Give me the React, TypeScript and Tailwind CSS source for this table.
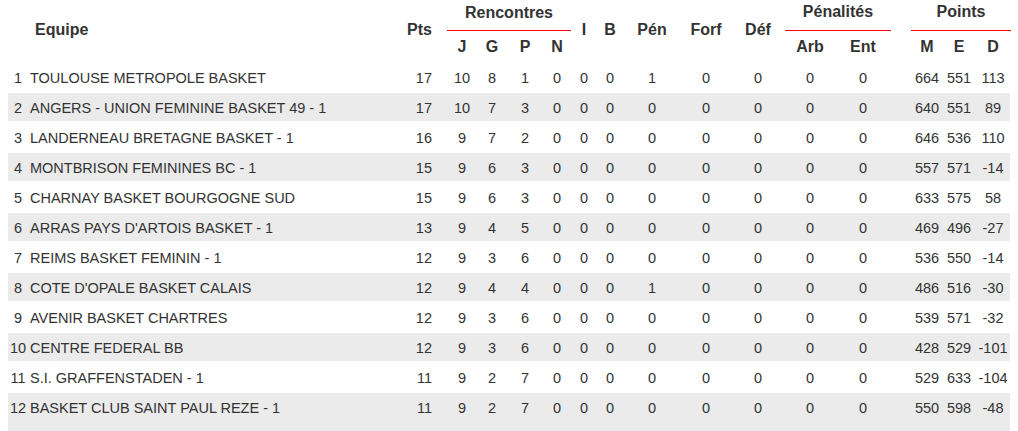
const rows: [number, string, number[]][] = [
  [1, 'TOULOUSE METROPOLE BASKET', [17, 10, 8, 1, 0, 0, 0, 1, 0, 0, 0, 0, 664, 551, 113]],
  [2, 'ANGERS - UNION FEMININE BASKET 49 - 1', [17, 10, 7, 3, 0, 0, 0, 0, 0, 0, 0, 0, 640, 551, 89]],
  [3, 'LANDERNEAU BRETAGNE BASKET - 1', [16, 9, 7, 2, 0, 0, 0, 0, 0, 0, 0, 0, 646, 536, 110]],
  [4, 'MONTBRISON FEMININES BC - 1', [15, 9, 6, 3, 0, 0, 0, 0, 0, 0, 0, 0, 557, 571, -14]],
  [5, 'CHARNAY BASKET BOURGOGNE SUD', [15, 9, 6, 3, 0, 0, 0, 0, 0, 0, 0, 0, 633, 575, 58]],
  [6, "ARRAS PAYS D'ARTOIS BASKET - 1", [13, 9, 4, 5, 0, 0, 0, 0, 0, 0, 0, 0, 469, 496, -27]],
  [7, 'REIMS BASKET FEMININ - 1', [12, 9, 3, 6, 0, 0, 0, 0, 0, 0, 0, 0, 536, 550, -14]],
  [8, "COTE D'OPALE BASKET CALAIS", [12, 9, 4, 4, 0, 0, 0, 1, 0, 0, 0, 0, 486, 516, -30]],
  [9, 'AVENIR BASKET CHARTRES', [12, 9, 3, 6, 0, 0, 0, 0, 0, 0, 0, 0, 539, 571, -32]],
  [10, 'CENTRE FEDERAL BB', [12, 9, 3, 6, 0, 0, 0, 0, 0, 0, 0, 0, 428, 529, -101]],
  [11, 'S.I. GRAFFENSTADEN - 1', [11, 9, 2, 7, 0, 0, 0, 0, 0, 0, 0, 0, 529, 633, -104]],
  [12, 'BASKET CLUB SAINT PAUL REZE - 1', [11, 9, 2, 7, 0, 0, 0, 0, 0, 0, 0, 0, 550, 598, -48]],
];

// rank | team | pts | J G P N | I B | Pén Forf Déf | Arb Ent | gap | M E D
const cols =
  'grid grid-cols-[20px_364px_55px_30px_30px_36px_28px_26px_26px_58px_50px_54px_50px_56px_20px_32px_32px_36px]';

function Row({ rank, team, values, striped, last }: { rank: number; team: string; values: number[]; striped: boolean; last: boolean }) {
  const [pts, ...rest] = values;
  const before = rest.slice(0, 11);
  const points = rest.slice(11);
  return (
    <div className={`${cols} ${last ? 'h-[38px]' : 'h-[28px]'} items-start ${striped ? 'bg-[#ebebeb]' : ''} leading-[30px]`}>
      <span className="text-center">{rank}</span>
      <span className="pl-[2px] whitespace-nowrap">{team}</span>
      <span className="pr-[15px] text-right">{pts}</span>
      {before.map((v, i) => (
        <span key={`b-${i}`} className="text-center">
          {v}
        </span>
      ))}
      <span />
      {points.map((v, i) => (
        <span key={`p-${i}`} className="text-center whitespace-nowrap">
          {v}
        </span>
      ))}
    </div>
  );
}

export default function App() {
  return (
    <div className="h-[431px] w-[1018px] overflow-hidden bg-white px-[8px] font-['Liberation_Sans',Arial,sans-serif] text-[14.5px] text-[#333]">
      <div className={`${cols} grid-rows-[31px_30px] text-[16px] font-bold leading-[20px]`}>
        <div className="col-span-2 row-span-2 self-center pb-[2px] pl-[27px]">Equipe</div>
        <div className="row-span-2 self-center pb-[2px] pr-[15px] text-right">Pts</div>
        <div className="col-span-4 border-b border-[#ff0000] pt-[3px] text-center">Rencontres</div>
        <div className="row-span-2 self-center pb-[2px] text-center">I</div>
        <div className="row-span-2 self-center pb-[2px] text-center">B</div>
        <div className="row-span-2 self-center pb-[2px] text-center">Pén</div>
        <div className="row-span-2 self-center pb-[2px] text-center">Forf</div>
        <div className="row-span-2 self-center pb-[2px] text-center">Déf</div>
        <div className="col-span-2 border-b border-[#ff0000] pt-[2px] text-center">Pénalités</div>
        <div className="row-span-2" />
        <div className="col-span-3 border-b border-[#ff0000] pt-[2px] text-center">Points</div>
        <div className="pt-[6px] text-center">J</div>
        <div className="pt-[6px] text-center">G</div>
        <div className="pt-[6px] text-center">P</div>
        <div className="pt-[6px] text-center">N</div>
        <div className="pt-[6px] text-center">Arb</div>
        <div className="pt-[6px] text-center">Ent</div>
        <div className="pt-[6px] text-center">M</div>
        <div className="pt-[6px] text-center">E</div>
        <div className="pt-[6px] text-center">D</div>
      </div>
      <div className="mt-[2px] flex flex-col gap-[2px]">
        {rows.map(([rank, team, values], i) => (
          <Row key={rank} rank={rank} team={team} values={values} striped={i % 2 === 1} last={i === rows.length - 1} />
        ))}
      </div>
    </div>
  );
}
